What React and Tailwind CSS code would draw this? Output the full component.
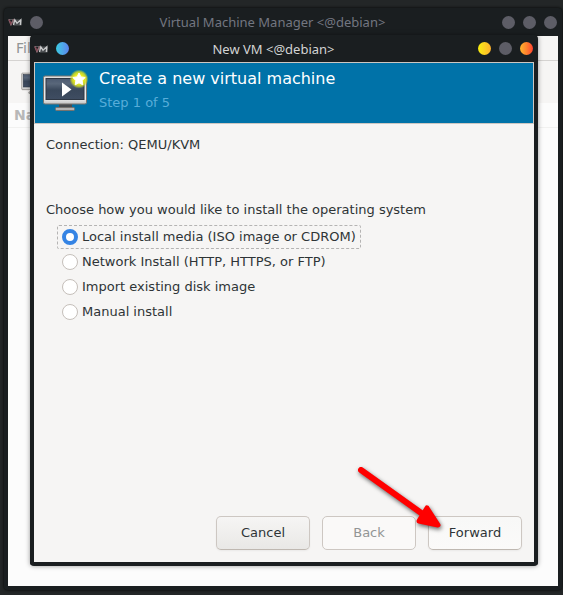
import React, { useState } from "react";

function VmLogo() {
  return (
    <svg viewBox="0 0 14 8" className="h-2 w-3.5 shrink-0" fill="none" aria-hidden="true">
      <path d="M1 1.500h4M5.500 2h8v5h-8z" stroke="#55585a" fill="#44474a" />
      <path d="M.8 1.200L3 6.500 5.800 1.200" stroke="#8f6a72" strokeWidth="1.600" />
      <path d="M1.500 2L3 6" stroke="#7b3040" strokeWidth="0.800" />
      <path d="M5.500 7L6.800 1.800 9 5.200 12.800 1.800 12.300 7" stroke="#c9cacb" strokeWidth="1.300" />
    </svg>
  );
}

function WindowButton({ label, className }) {
  return <button type="button" aria-label={label} className={`size-[13px] shrink-0 rounded-full ${className}`} />;
}

function TitleBar({ title, titleClass, menuClass, minClass, maxClass, closeClass, className }) {
  return (
    <header className={`flex shrink-0 items-center ${className}`}>
      <div className="flex items-center gap-2">
        <VmLogo />
        <WindowButton label="Window menu" className={menuClass} />
      </div>
      <h1 className={`flex-1 text-center font-['Noto_Sans',sans-serif] text-[13px] leading-5 ${titleClass}`}>{title}</h1>
      <div className="flex items-center gap-2">
        <WindowButton label="Minimize" className={minClass} />
        <WindowButton label="Maximize" className={maxClass} />
        <WindowButton label="Close" className={closeClass} />
      </div>
    </header>
  );
}

function Monitor({ badge = false, className }) {
  return (
    <svg viewBox="0 0 48 44" className={className} aria-hidden="true">
      <defs>
        <linearGradient id="screen" x1="0" y1="0" x2="0" y2="1">
          <stop offset="0" stopColor="#4c5a70" />
          <stop offset="0.250" stopColor="#59677a" />
          <stop offset="0.550" stopColor="#39475a" />
          <stop offset="1" stopColor="#3f4d62" />
        </linearGradient>
        <linearGradient id="frame" x1="0" y1="0" x2="0" y2="1">
          <stop offset="0" stopColor="#dedede" />
          <stop offset="0.800" stopColor="#eeeeee" />
          <stop offset="1" stopColor="#c2c2c2" />
        </linearGradient>
        <radialGradient id="glow">
          <stop offset="0.450" stopColor="#f2f21c" />
          <stop offset="0.750" stopColor="#d3dd22" stopOpacity="0.850" />
          <stop offset="1" stopColor="#c8d82e" stopOpacity="0" />
        </radialGradient>
      </defs>
      <path d="M17 35h13v4H17z" fill="#4a4d50" />
      <rect x="13.500" y="38.500" width="19" height="3" rx="1" fill="#b5b5b5" stroke="#77736f" />
      <rect x="1.500" y="7" width="43" height="28" rx="1.500" fill="url(#frame)" stroke="#77736f" />
      <rect x="4" y="9.500" width="38" height="21" fill="url(#screen)" stroke="#2e3744" />
      {badge && (
        <>
          <path d="M20 13.500l9.500 7L20 27.500z" fill="#fff" />
          <circle cx="37" cy="10" r="9.500" fill="url(#glow)" />
          <path
            d="M37 4l1.900 3.900 4.300.6-3.100 3 .7 4.300-3.800-2-3.800 2 .7-4.300-3.100-3 4.300-.6z"
            fill="#fff"
            stroke="#fff"
            strokeLinejoin="round"
          />
        </>
      )}
    </svg>
  );
}

const METHODS = [
  "Local install media (ISO image or CDROM)",
  "Network Install (HTTP, HTTPS, or FTP)",
  "Import existing disk image",
  "Manual install",
];

function ManagerWindow() {
  return (
    <section className="flex flex-1 flex-col rounded border-4 border-t-0 border-[#1a1e20] bg-[#1a1e20] shadow-[0_0_3px_#000]">
      <TitleBar
        title="Virtual Machine Manager <@debian>"
        className="h-7 pr-px"
        titleClass="text-[#737680]"
        menuClass="bg-[#5d5d66]"
        minClass="bg-[#5d5d66]"
        maxClass="bg-[#5d5d66]"
        closeClass="bg-[#5d5d66]"
      />
      <div className="flex flex-1 flex-col bg-[#fcfcfc] text-sm text-[#929595]">
        <nav className="flex h-[25px] items-center border-b border-[#d5d3d1] bg-[#f6f5f4] px-2">
          <button type="button">File</button>
        </nav>
        <div className="flex h-[42px] items-center bg-[#f6f5f4] px-3">
          <button type="button" aria-label="Create a new virtual machine">
            <Monitor className="h-[26px] w-[30px]" />
          </button>
        </div>
        <div className="flex h-[25px] items-center border-b border-[#f1f1f0] px-1.5 font-bold text-[#b8b8b8]">Name</div>
      </div>
    </section>
  );
}

function NewVmDialog() {
  const [method, setMethod] = useState(0);
  const button = "h-[34px] w-[94px] rounded-[5px] border border-[#cdc7c2] text-[13px]";
  return (
    <section
      role="dialog"
      aria-label="New VM"
      className="absolute top-[35px] right-[25px] bottom-[29px] left-[30px] flex flex-col rounded border-4 border-t-0 border-[#1a1e20] bg-[#1a1e20] shadow-[0_0_5px_#0006]"
    >
      <TitleBar
        title="New VM <@debian>"
        className="h-[27px] pr-px"
        titleClass="text-[#d3d4d4]"
        menuClass="bg-linear-to-r from-[#37cbe2] to-[#5b82ec]"
        minClass="bg-linear-to-r from-[#f7ef0a] to-[#ffb12b]"
        maxClass="bg-[#5d5d66]"
        closeClass="bg-linear-to-r from-[#ffb52c] to-[#ff3d2e]"
      />
      <div className="flex flex-1 flex-col bg-[#f6f5f4] text-[#2e3436]">
        <div className="flex h-[62px] shrink-0 gap-[9px] border border-[#cdc7c2] bg-[#0072a8] pt-1.5 pl-[7px]">
          <Monitor badge className="h-11 w-12 shrink-0" />
          <div>
            <h2 className="text-base leading-5 text-white">Create a new virtual machine</h2>
            <p className="mt-1 text-[13px] leading-5 text-[#58add9]">Step 1 of 5</p>
          </div>
        </div>
        <form className="flex flex-1 flex-col p-3 pt-[13px]" onSubmit={(e) => e.preventDefault()}>
          <p className="text-[13px] leading-4">Connection: QEMU/KVM</p>
          <fieldset className="mt-[49px]">
            <legend className="text-[13px] leading-4">Choose how you would like to install the operating system</legend>
            <div className="mt-[7px] ml-[11px] flex flex-col items-start gap-px">
              {METHODS.map((label, i) => (
                <label
                  key={label}
                  className={`flex h-6 items-center gap-1 rounded-xs border border-dashed px-1 text-[13px] leading-4 ${
                    i === method ? "border-[#b5b4b3]" : "border-transparent"
                  }`}
                >
                  <input
                    type="radio"
                    name="method"
                    checked={i === method}
                    onChange={() => setMethod(i)}
                    className="size-4 shrink-0 appearance-none rounded-full border border-[#c5bfba] bg-white checked:border-4 checked:border-[#3584e4]"
                  />
                  {label}
                </label>
              ))}
            </div>
          </fieldset>
          <div className="mt-auto flex justify-end gap-3">
            <button type="button" className={`${button} border-b-[#bfb8b1] bg-linear-to-b from-[#f6f5f4] to-[#e9e8e6] shadow-xs`}>
              Cancel
            </button>
            <button type="button" disabled className={`${button} bg-[#faf9f8] text-[#929595]`}>
              Back
            </button>
            <button type="submit" className={`${button} border-b-[#bfb8b1] bg-linear-to-b from-[#f8f8f7] to-[#fbfaf9] shadow-xs`}>
              Forward
            </button>
          </div>
        </form>
      </div>
      <svg
        viewBox="0 0 90 70"
        className="pointer-events-none absolute right-[92px] bottom-[30px] h-[70px] w-[90px] drop-shadow-[1px_2px_2px_#0009]"
        aria-hidden="true"
      >
        <path d="M9 8L72 53" stroke="#f00" strokeWidth="6" strokeLinecap="round" />
        <path d="M75 46L86 63L67 59z" fill="#f00" stroke="#f00" strokeWidth="5" strokeLinejoin="round" />
      </svg>
    </section>
  );
}

export default function App() {
  return (
    <main className="relative flex min-h-screen bg-[#232627] pt-2 pr-px pb-[5px] pl-1 font-['DejaVu_Sans',sans-serif]">
      <ManagerWindow />
      <NewVmDialog />
    </main>
  );
}
